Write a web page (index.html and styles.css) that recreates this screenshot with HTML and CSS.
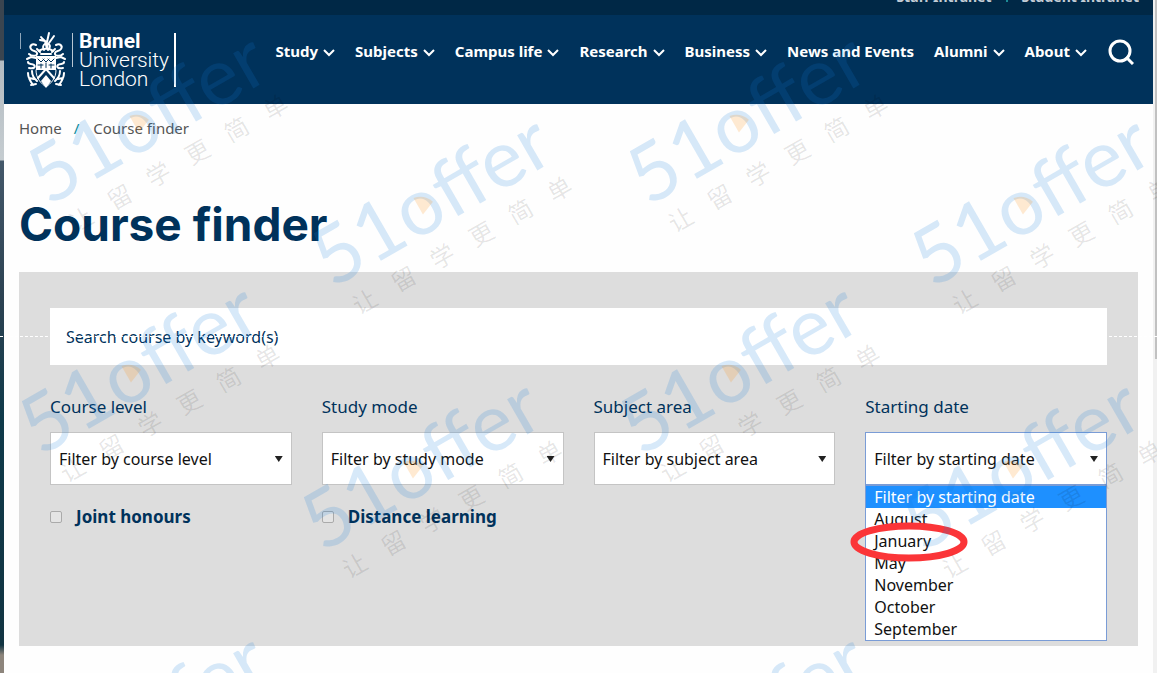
FILE: index.html
```html
<!DOCTYPE html>
<html lang="en">
<head>
    <meta charset="UTF-8">
    <meta name="viewport" content="width=device-width, initial-scale=1.0">
    <title>Course finder | Brunel University London</title>
    <link rel="stylesheet" href="styles.css">
</head>
<body>
    <div class="page">
        <div class="topbar">
            <a href="#">Staff Intranet</a>
            <span class="divider"></span>
            <a href="#">Student Intranet</a>
        </div>

        <header>
            <a href="#" class="logo">
                <svg class="crest" viewBox="0 0 42 58" width="42" height="58" fill="none" stroke="#fff" stroke-width="2" stroke-linecap="round">
                    <path d="M16 6c2 3 5 4 6 7M22 11l2-9M24 12l5-7M15 9l5 1M21 12c-3 2-4 4-2 7M23 13c3 1 2 4 0 6"/>
                    <path stroke-width="3" d="M21 11l1 5"/>
                    <path d="M14 20c3-3 11-3 14 0M16 23h10"/>
                    <path d="M11 14c-4-2-7 1-5 4s5 1 6 4-5 4-8 1M31 14c4-2 7 1 5 4s-5 1-6 4 5 4 8 1M12 18l3 3M30 18l-3 3"/>
                    <path d="M2 28l4-2 5 1M40 28l-4-2-5 1M3 31c0 3 4 1 6 3s0 4-5 3M39 31c0 3-4 1-6 3s0 4 5 3"/>
                    <path d="M3 42c0 4 2 8 5 12M39 42c0 4-2 8-5 12M7 40c0 5 2 7 5 10M35 40c0 5-2 7-5 10M4 47l5 1M38 47l-5 1M6 54l5-1M36 54l-5-1"/>
                    <path fill="#fff" stroke="none" d="M11 25h20v14H11z"/>
                    <path stroke="#00325b" stroke-width="1" d="M13 28l3 3 3-3M18 28l3 3 3-3M23 28l3 3 3-3M13 34h5M24 34h5M16 33v4M26 33v4M21 32v5"/>
                    <path stroke-width="1" d="M11 39c0 9 5 13 10 17 5-4 10-8 10-17"/>
                    <path stroke-width="2" d="M13 47l8-9 8 9"/>
                    <path fill="#fff" stroke="none" d="M21 44l5 6-5 7-5-7z"/>
                </svg>
                <span class="logo-text"><strong>Brunel</strong><br>University<br>London</span>
            </a>
            <nav>
                <ul>
                    <li><a href="#">Study</a><svg class="chevron" viewBox="0 0 12 8"><path d="M1 1l5 5 5-5"/></svg></li>
                    <li><a href="#">Subjects</a><svg class="chevron" viewBox="0 0 12 8"><path d="M1 1l5 5 5-5"/></svg></li>
                    <li><a href="#">Campus life</a><svg class="chevron" viewBox="0 0 12 8"><path d="M1 1l5 5 5-5"/></svg></li>
                    <li><a href="#">Research</a><svg class="chevron" viewBox="0 0 12 8"><path d="M1 1l5 5 5-5"/></svg></li>
                    <li><a href="#">Business</a><svg class="chevron" viewBox="0 0 12 8"><path d="M1 1l5 5 5-5"/></svg></li>
                    <li><a href="#">News and Events</a></li>
                    <li><a href="#">Alumni</a><svg class="chevron" viewBox="0 0 12 8"><path d="M1 1l5 5 5-5"/></svg></li>
                    <li><a href="#">About</a><svg class="chevron" viewBox="0 0 12 8"><path d="M1 1l5 5 5-5"/></svg></li>
                </ul>
                <button type="button" class="search-btn" aria-label="Search">
                    <svg viewBox="0 0 26 26" width="26" height="26" fill="none" stroke="#fff" stroke-width="3"><circle cx="12" cy="12" r="10"/><path d="M18 18l7 7"/></svg>
                </button>
            </nav>
        </header>

        <main>
            <div class="breadcrumb">
                <a href="#">Home</a><span class="slash">/</span><a href="#">Course finder</a>
            </div>
            <h1>Course finder</h1>

            <form class="finder">
                <input type="text" class="keyword" aria-label="Search course by keyword(s)" placeholder="Search course by keyword(s)">
                <div class="filters">
                    <div class="filter">
                        <label for="level">Course level</label>
                        <div class="select-box">
                            <select id="level"><option>Filter by course level</option></select>
                        </div>
                        <label class="check"><input type="checkbox"> Joint honours</label>
                    </div>
                    <div class="filter">
                        <label for="mode">Study mode</label>
                        <div class="select-box">
                            <select id="mode"><option>Filter by study mode</option></select>
                        </div>
                        <label class="check"><input type="checkbox"> Distance learning</label>
                    </div>
                    <div class="filter">
                        <label for="subject">Subject area</label>
                        <div class="select-box">
                            <select id="subject"><option>Filter by subject area</option></select>
                        </div>
                    </div>
                    <div class="filter">
                        <label for="start">Starting date</label>
                        <div class="select-box open">
                            <select id="start"><option>Filter by starting date</option></select>
                            <ul class="menu">
                                <li class="selected">Filter by starting date</li>
                                <li>August</li>
                                <li>January</li>
                                <li>May</li>
                                <li>November</li>
                                <li>October</li>
                                <li>September</li>
                            </ul>
                            <svg class="ring" viewBox="0 0 120 40" width="120" height="40"><ellipse cx="60" cy="20" rx="55" ry="16"/></svg>
                        </div>
                    </div>
                </div>
            </form>
        </main>
    </div>
    <div class="scrollbar"></div>

    <!-- watermark -->
    <svg class="watermark" aria-hidden="true">
        <defs>
            <g id="mark">
                <text class="mark-name" x="0" y="0">51offer</text>
                <path class="mark-wedge" d="M116 -19v-19q11 2 15 13z"/>
                <text class="mark-slogan" x="10 55 100 145 190 235" y="36">让留学更简单</text>
            </g>
        </defs>
        <use href="#mark" transform="translate(48 207) rotate(-30)"/>
        <use href="#mark" transform="translate(332 289) rotate(-30)"/>
        <use href="#mark" transform="translate(648 207) rotate(-30)"/>
        <use href="#mark" transform="translate(932 289) rotate(-30)"/>
        <use href="#mark" transform="translate(40 457) rotate(-30)"/>
        <use href="#mark" transform="translate(322 553) rotate(-30)"/>
        <use href="#mark" transform="translate(640 457) rotate(-30)"/>
        <use href="#mark" transform="translate(922 553) rotate(-30)"/>
        <use href="#mark" transform="translate(48 807) rotate(-30)"/>
        <use href="#mark" transform="translate(648 807) rotate(-30)"/>
    </svg>
</body>
</html>
```
FILE: styles.css
```css
* {
    box-sizing: border-box;
}
body {
    margin: 0;
    min-height: 100vh;
    display: flex;
    position: relative;
    overflow: hidden;
    font-family: "Noto Sans", "Open Sans", sans-serif;
    font-size: 16px;
    color: #00325b;
    background: linear-gradient(#3a4550 0, #3a4550 60px, #b4bcc2 61px, #c5ccd0 160px, #44586a 161px, #2c4252 300px, #0f3a4a 420px, #123442 645px, #8d857c 655px);
}
ul {
    list-style: none;
    margin: 0;
    padding: 0;
}
a {
    color: inherit;
    text-decoration: none;
}
.page {
    flex: 1;
    margin-left: 4px;
    background: #fefefe;
}
.topbar {
    display: flex;
    justify-content: flex-end;
    align-items: flex-end;
    gap: 14px;
    height: 15px;
    padding: 0 14px 8px 0;
    background: #002846;
    color: #c3ccd5;
    font-size: 14px;
    font-weight: 700;
    line-height: 20px;
}
.divider {
    width: 2px;
    height: 14px;
    margin-bottom: 5px;
    background: #1c8a96;
}
header {
    display: flex;
    justify-content: space-between;
    align-items: flex-start;
    padding: 16px 19px 0 16px;
    height: 89px;
    background: #00325b;
    color: #fff;
}
.logo {
    display: flex;
    gap: 5px;
    padding-left: 5px;
    background: linear-gradient(#8fa6ba, #8fa6ba) 0 2px / 1px 16px no-repeat;
}
.logo-text {
    padding: 1px 7px 0;
    font-family: Roboto, sans-serif;
    font-size: 21px;
    font-weight: 300;
    line-height: 19px;
    background: linear-gradient(#b8c6d2, #b8c6d2) 0 2px / 1px 34px no-repeat, linear-gradient(#fff, #fff) 100% 2px / 2px 54px no-repeat;
}
.logo-text strong {
    font-weight: 700;
}
nav {
    display: flex;
    align-items: center;
    gap: 21px;
    padding-top: 8px;
}
nav ul {
    display: flex;
    gap: 20px;
    padding-bottom: 2px;
    font-size: 15px;
    font-weight: 700;
    line-height: 24px;
}
nav li {
    display: flex;
    align-items: center;
    gap: 5px;
    white-space: nowrap;
}
.chevron {
    width: 12px;
    height: 8px;
    margin-top: 3px;
    fill: none;
    stroke: #fff;
    stroke-width: 2;
}
.search-btn {
    width: 26px;
    height: 26px;
    padding: 0;
    border: none;
    background: none;
    cursor: pointer;
}
main {
    padding: 12px 15px 27px;
}
.breadcrumb {
    color: #555;
    font-size: 15px;
    line-height: 24px;
}
.slash {
    margin: 0 14px 0 12px;
    color: #0a8a9a;
}
h1 {
    margin: 56px 0 20px;
    font-family: Inter, sans-serif;
    font-size: 46px;
    font-weight: 700;
    line-height: 56px;
}
.finder {
    min-height: 374px;
    padding: 36px 31px;
    background: #ddd;
    position: relative;
}
.finder::after {
    content: "";
    position: absolute;
    left: -19px;
    right: -19px;
    top: 64px;
    border-top: 1px dashed #fff;
}
.keyword {
    display: block;
    width: 100%;
    height: 57px;
    padding: 0 16px;
    border: none;
    background: #fff;
    font: inherit;
    color: #00325b;
}
.keyword::placeholder {
    color: #00325b;
    opacity: 1;
}
.filters {
    display: grid;
    grid-template-columns: repeat(4, 1fr);
    gap: 30px;
    margin-top: 30px;
}
.filter label {
    display: block;
    font-size: 17px;
    line-height: 24px;
}
.select-box {
    position: relative;
    margin-top: 13px;
}
.select-box::after {
    content: "";
    position: absolute;
    right: 9px;
    top: 24px;
    width: 8px;
    height: 6px;
    background: #222;
    clip-path: polygon(0 0, 100% 0, 50% 100%);
}
select {
    display: block;
    width: 100%;
    height: 53px;
    padding: 0 8px;
    appearance: none;
    border: 1px solid #c4c4c4;
    border-radius: 0;
    background: #fff;
    font: inherit;
    color: #111;
}
.open select {
    border-color: #7a9cd6;
}
.menu {
    position: absolute;
    top: 53px;
    left: 0;
    right: 0;
    border: 1px solid #7a9cd6;
    background: #fff;
    color: #111;
}
.menu li {
    padding: 0 8px;
    line-height: 22px;
}
.menu .selected {
    background: #1e90ff;
    color: #fff;
}
.ring {
    position: absolute;
    left: -16px;
    top: 90px;
    fill: none;
    stroke: #fb3538;
    stroke-width: 7;
}
.filter .check {
    display: flex;
    align-items: center;
    gap: 14px;
    margin-top: 20px;
    font-weight: 700;
}
.check input {
    appearance: none;
    width: 12px;
    height: 12px;
    margin: 0;
    border: 1px solid #aaa;
    border-radius: 2px;
    background: #e4e4e4;
}
.scrollbar {
    width: 4px;
    background: linear-gradient(#c1c1c1, #c1c1c1) 2px 0 / 2px 359px no-repeat #f1f1f1;
}
.watermark {
    position: absolute;
    left: 0;
    top: 0;
    width: 100%;
    height: 100%;
    pointer-events: none;
}
.mark-name {
    font-family: Lato, sans-serif;
    font-size: 80px;
    font-weight: 400;
    fill: rgba(20, 125, 220, 0.17);
}
.mark-wedge {
    fill: rgba(255, 150, 30, 0.2);
}
.mark-slogan {
    font-family: "Noto Sans CJK SC", sans-serif;
    font-size: 24px;
    font-weight: 400;
    fill: rgba(0, 0, 0, 0.1);
}
@media (max-width: 900px) {
    header {
        flex-wrap: wrap;
        height: auto;
    }
    nav ul {
        flex-wrap: wrap;
    }
    .filters {
        grid-template-columns: 1fr 1fr;
    }
}
```
